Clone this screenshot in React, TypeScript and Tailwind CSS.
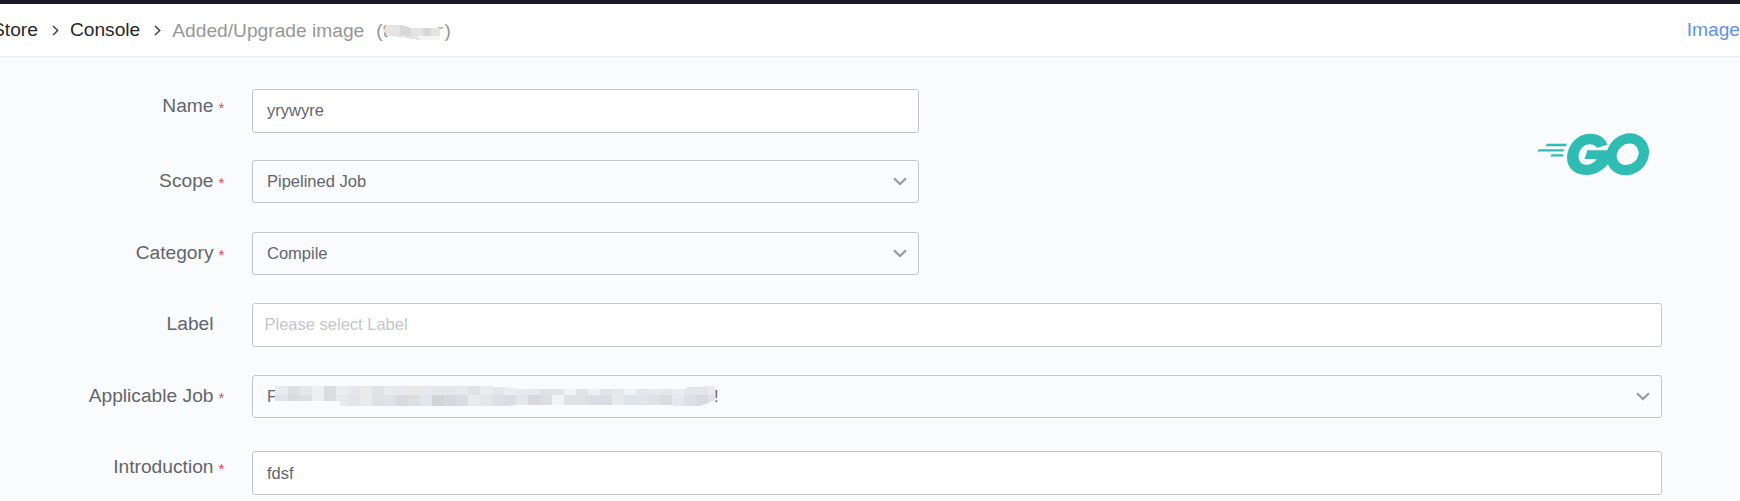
import React from "react";

const topCells = ["#e7eaee","#dcdfe3","#e6e7e9","#eeeff1","#d9dde1","#ebecf1","#e5e7eb","#eaeaea","#dfe3e7","#e8eaee","#e6e8ec","#e9e9ea","#e6e8ea","#e3e8ea","#e5e8ea","#e6e8eb","#dfe2e6","#ebecee","#e4e6e8","#ecedef","#e8e9ec","#e7e8eb","#e1e2e4","#e3e4e6","#f2f3f7","#e1e2e4","#edeef1","#e2e3e6","#e6e7ea","#f1f2f5","#e5e6e9","#e8e9ec","#e6e7e9","#ebecef","#e5e5e8","#e3e4e7","#ececef"];
const bottomCells = ["#e1e4e9","#d9dbe0","#dedfe2","#eeeff1","#d9dde1","#e8e9ee","#e3e5e9","#eaeaea","#dfe1e5","#e0e2e6","#d9dade","#dededf","#e1e6ea","#d3d3d3","#d4d9dd","#dbdce1","#e9eaec","#e6e6e6","#dde1e5","#dcdde1","#e5e6e9","#d8d7dc","#dddde2","#f2f3f7","#e0e1e3","#dfe0e2","#dcdde0","#dcdde1","#e9e9ea","#dee3e8","#e3e4e7","#e0e1e5","#dbdce0","#e6e8ec","#dfe0e4","#d9dadf","#e3e4e7"];

function Mosaic() {
  return (
    <svg width="440" height="20" viewBox="0 0 440 20" className="relative -ml-[2px] block" shapeRendering="crispEdges">
      <clipPath id="smudge">
        <path d="M0 0H218V1H230L244 3H412V1H429V0H440V14L434 17L425 20H398V19H243L230 20H65V15H0Z" />
      </clipPath>
      <g clipPath="url(#smudge)">
        {topCells.map((c, i) => (
          <rect key={i} x={i === 0 ? 0 : 13 + (i - 1) * 12} y={0} width={i === 0 ? 13 : 12} height={9} fill={c} />
        ))}
        {bottomCells.map((c, i) => (
          <rect key={i} x={i === 0 ? 0 : 13 + (i - 1) * 12} y="9" width={i === 0 ? 13 : 12} height={11} fill={c} />
        ))}
      </g>
    </svg>
  );
}

function Chevron() {
  return (
    <svg width="14" height="9" viewBox="0 0 14 9" fill="none" className="shrink-0">
      <path d="M1 1.2L7 7L13 1.2" stroke="#979aa1" strokeWidth="2.2" />
    </svg>
  );
}

function Crumb() {
  return (
    <svg width="7" height="11" viewBox="0 0 7 11" fill="none" className="shrink-0">
      <path d="M1 1L5.7 5.5L1 10" stroke="#3b3d42" strokeWidth="1.4" />
    </svg>
  );
}

type FieldProps = {
  label: string;
  required?: boolean;
  select?: boolean;
  rowClass: string;
  labelClass: string;
  boxClass: string;
  children: React.ReactNode;
};

function Field({ label, required = true, select, rowClass, labelClass, boxClass, children }: FieldProps) {
  return (
    <div className={`flex items-start ${rowClass}`}>
      <label className={`flex w-[225.5px] shrink-0 justify-end text-[19.2px] leading-5 text-[#63656b] ${labelClass}`}>
        <span>{label}</span>
        <span className="w-[12px] pl-[5px] pt-[2px] text-[15px] leading-5 text-[#e04550]">{required ? "*" : ""}</span>
      </label>
      <div
        className={`ml-[26.5px] flex items-center justify-between rounded-[3px] border border-[#c3c5cb] pl-[14px] pr-[11px] text-[16.5px] leading-5 text-[#63656e] ${
          select ? "h-[43px]" : "h-[44px] bg-white"
        } ${boxClass}`}
      >
        {children}
        {select && <Chevron />}
      </div>
    </div>
  );
}

function GoLogo() {
  return (
    <svg width="120" height="52" viewBox="72 54 360 156" fill="#2fbcb2">
      <path d="M111 101.5H171L168 108.5H107ZM86 117.5H163L160 124.5H82ZM125 132.5H160L159 139.5H121Z" />
      <path d="M292 104L262 113C248 97 224 100 213 117C201 135 203 161 226 164C240 166 253 158 260 147H224L232 121H300V155L291 166C270 190 242 199 211 193C176 185 164 151 175 120C190 80 228 63 263 75C278 80 288 91 292 104Z" />
      <path
        d="M286 133A67 60 0 1 1 420 133A67 60 0 1 1 286 133ZM318 133A35 30 0 1 0 388 133A35 30 0 1 0 318 133Z"
        fillRule="evenodd"
        transform="rotate(-40 353 133)"
      />
    </svg>
  );
}

export default function App() {
  return (
    <div className="h-[501px] w-full overflow-hidden bg-[#fafbfd] font-['Liberation_Sans',Arial,sans-serif]">
      <header className="flex h-[57px] items-center justify-between overflow-hidden whitespace-nowrap border-b border-t-4 border-b-[#ebecf0] border-t-[#1a1829] bg-white text-[19.2px] leading-5 shadow-[0_1px_1px_#f4f5f8]">
        <nav className="-ml-[8px] flex items-center text-[#26272b]">
          <span>Store</span>
          <span className="ml-[14px]"><Crumb /></span>
          <span className="ml-[11px]">Console</span>
          <span className="ml-[14px]"><Crumb /></span>
          <span className="ml-[11px] flex pt-[2px] text-[#979797]">
            <span>Added/Upgrade image</span>
            <span className="ml-[12px]">(t</span>
            <svg width="57" height="19" viewBox="0 0 57 19" className="relative -ml-[5px]" shapeRendering="crispEdges">
              <path d="M4 4H19L28 7H57V15L50 19H36L19 16L7 15L0 10Z" fill="#e4e4e3" />
              <path d="M33 15H57V19H38Z" fill="#f5f5f5" />
              <path d="M17 4L28 7V15L17 14ZM40 7H48V15H40Z" fill="#d9d8d8" />
            </svg>
            <span className="-ml-[3px] h-[8px] overflow-hidden">r</span>
            <span className="ml-[1px]">)</span>
          </span>
        </nav>
        <a className="text-[#5b93e6]">Image</a>
      </header>

      <main className="pt-8">
        <section className="flex">
          <div>
            <Field label="Name" rowClass="h-[71px]" labelClass="pt-[7px]" boxClass="w-[667px] pb-[2px]">
              yrywyre
            </Field>
            <Field label="Scope" select rowClass="h-[72px]" labelClass="pt-[11px]" boxClass="w-[667px]">
              <span className="-mt-[2px]">Pipelined Job</span>
            </Field>
            <Field label="Category" select rowClass="h-[71px]" labelClass="pt-[11px]" boxClass="w-[667px]">
              <span className="-mt-[2px]">Compile</span>
            </Field>
          </div>
          <div className="ml-[615px] mt-[39px]">
            <GoLogo />
          </div>
        </section>
        <Field label="Label" required={false} rowClass="h-[72px]" labelClass="pt-[11px]" boxClass="w-[1410px] pb-[2px]">
          <span className="-ml-[2.5px] text-[#c4c6cc]">Please select Label</span>
        </Field>
        <Field label="Applicable Job" select rowClass="h-[76px]" labelClass="pt-[11px]" boxClass="w-[1410px]">
          <span className="-mt-[2px] flex items-center">
            <span>F</span>
            <Mosaic />
            <span className="-ml-[1px]">!</span>
          </span>
        </Field>
        <Field label="Introduction" rowClass="h-[50px]" labelClass="pt-[6px]" boxClass="w-[1410px]">
          fdsf
        </Field>
      </main>
    </div>
  );
}
